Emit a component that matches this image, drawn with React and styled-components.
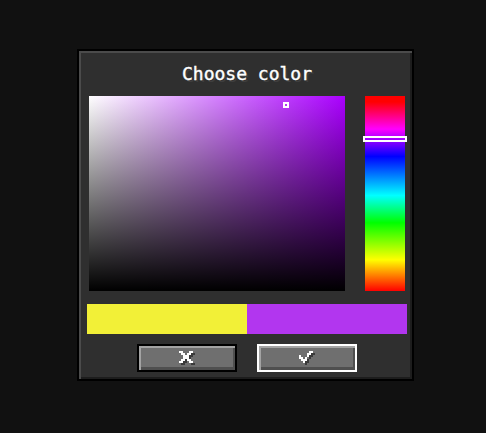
import React from "react";
import styled, { createGlobalStyle } from "styled-components";

const Global = createGlobalStyle`
  html, body { margin: 0; padding: 0; background: #111111; }
  body { font-family: "DejaVu Sans Mono", monospace; }
`;

const Panel = styled.div`
  margin: 49px 0 0 77px;
  width: 337px;
  height: 332px;
  box-sizing: border-box;
  border: 2px solid #000;
  background: #2f2f2f;
  box-shadow: inset 2px 2px 0 #4b4b4b, inset -2px -2px 0 #1d1d1d;
  display: flex;
  flex-direction: column;
`;

const Title = styled.div`
  margin-top: 13px;
  height: 20px;
  line-height: 20px;
  padding-left: 3px;
  text-align: center;
  color: #ffffff;
  font-family: "DejaVu Sans Mono", monospace;
  font-size: 18px;
  -webkit-text-stroke: 0.4px #ffffff;
  text-shadow: 2px 2px 0 #3e3e3e;
`;

const PickerRow = styled.div`
  margin-top: 12px;
  padding-left: 10px;
  display: flex;
  gap: 20px;
  height: 195px;
`;

const SVSquare = styled.div`
  position: relative;
  width: 256px;
  height: 195px;
  background:
    linear-gradient(to top, #000 0%, rgba(0, 0, 0, 0) 100%),
    linear-gradient(to right, #ffffff 0%, hsl(${(p) => p.$hue}, 100%, 50%) 100%);
`;

const SVMarker = styled.div`
  position: absolute;
  width: 6px;
  height: 6px;
  box-sizing: border-box;
  border: 2px solid #fff;
`;

const HueBar = styled.div`
  position: relative;
  width: 40px;
  height: 195px;
  background: linear-gradient(
    to bottom,
    #ff0000 0%,
    #ff0000 3%,
    #ff00ff 17%,
    #0000ff 31%,
    #00ffff 51%,
    #00ff00 65%,
    #ffff00 84%,
    #ff0000 100%
  );
`;

const HueMarker = styled.div`
  position: absolute;
  left: -2px;
  width: 44px;
  height: 6px;
  box-sizing: border-box;
  border: 2px solid #fff;
`;

const Preview = styled.div`
  margin: 13px 0 0 8px;
  width: 320px;
  height: 30px;
  display: flex;
`;

const Swatch = styled.div`
  flex: 1;
  background: ${(p) => p.$color};
`;

const ButtonRow = styled.div`
  margin-top: 10px;
  padding-left: 58px;
  display: flex;
  gap: 20px;
`;

const Button = styled.button`
  width: 100px;
  height: 28px;
  padding: 0;
  box-sizing: border-box;
  border: 2px solid ${(p) => (p.$focused ? "#ffffff" : "#000000")};
  background: #6f6f6f;
  box-shadow: inset 2px 2px 0 #a3a3a3, inset -2px -3px 0 #4f4f4f;
  display: flex;
  align-items: center;
  justify-content: center;
  cursor: pointer;
`;

const Glyph = ({ pixels, w, h }) => {
  const u = 2;
  return (
    <svg width={(w + 1) * u} height={(h + 1) * u} shapeRendering="crispEdges">
      {pixels.map(([x, y], i) => (
        <rect key={"s" + i} x={(x + 1) * u} y={(y + 1) * u} width={u} height={u} fill="#3a3a3a" />
      ))}
      {pixels.map(([x, y], i) => (
        <rect key={"w" + i} x={x * u} y={y * u} width={u} height={u} fill="#ffffff" />
      ))}
    </svg>
  );
};

const toPixels = (rows) =>
  rows.flatMap((cols, y) => cols.map((x) => [x, y]));

const crossPixels = toPixels([
  [0, 1, 5, 6],
  [1, 2, 4, 5],
  [2, 3, 4],
  [2, 3, 4],
  [1, 2, 4, 5],
  [0, 1, 5, 6],
]);

const checkPixels = toPixels([
  [5, 6],
  [4, 5],
  [0, 4],
  [0, 1, 3],
  [1, 2, 3],
  [2],
]);

export default function App() {
  const hue = 280;
  return (
    <>
      <Global />
      <Panel>
        <Title>Choose color</Title>
        <PickerRow>
          <SVSquare $hue={hue}>
            <SVMarker style={{ left: 194, top: 6 }} />
          </SVSquare>
          <HueBar>
            <HueMarker style={{ top: 40 }} />
          </HueBar>
        </PickerRow>
        <Preview>
          <Swatch $color="#f2f037" />
          <Swatch $color="#b236ef" />
        </Preview>
        <ButtonRow>
          <Button aria-label="Cancel">
            <Glyph pixels={crossPixels} w={7} h={6} />
          </Button>
          <Button $focused aria-label="Confirm">
            <Glyph pixels={checkPixels} w={7} h={6} />
          </Button>
        </ButtonRow>
      </Panel>
    </>
  );
}
